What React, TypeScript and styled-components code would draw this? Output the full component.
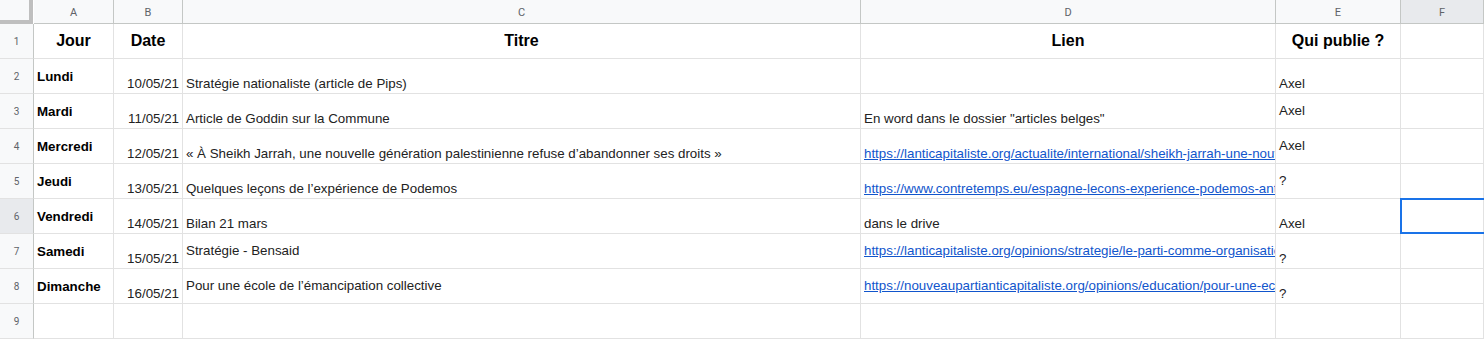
import React from 'react';
import styled, { createGlobalStyle, css } from 'styled-components';

const GlobalStyle = createGlobalStyle`
    html, body {
        margin: 0;
        padding: 0;
        background: #ffffff;
        overflow: hidden;
    }
`;

type VAlign = 'top' | 'middle' | 'bottom';

const COLS = [80, 69, 678, 415, 125];
const LETTERS = ['A', 'B', 'C', 'D', 'E', 'F'];

const Sheet = styled.div`
    display: grid;
    grid-template-columns: 34px ${COLS.map(c => `${c}px`).join(' ')} 1fr;
    grid-auto-rows: 35px;
    grid-template-rows: 24px;
    width: 1484px;
    font-family: "Liberation Sans", Arial, sans-serif;
    color: #000;
`;

const Corner = styled.div`
    background: #f8f9fa;
    border-right: 4px solid #bfbfbf;
    border-bottom: 4px solid #bfbfbf;
    box-sizing: border-box;
    width: 33px;
`;

const ColHead = styled.div<{ $active?: boolean }>`
    display: flex;
    align-items: center;
    justify-content: center;
    background: ${p => (p.$active ? '#e8eaed' : '#f8f9fa')};
    border-right: 1px solid #c4c7c5;
    border-bottom: 1px solid #c4c7c5;
    box-sizing: border-box;
    font-family: Roboto, "Liberation Sans", sans-serif;
    font-size: 11px;
    color: #5f6368;
    padding-top: 1px;
`;

const RowHead = styled.div<{ $active?: boolean }>`
    display: flex;
    align-items: center;
    justify-content: center;
    background: ${p => (p.$active ? '#e8eaed' : '#f8f9fa')};
    border-right: 1px solid #c4c7c5;
    border-bottom: 1px solid #e2e2e2;
    box-sizing: border-box;
    font-family: Roboto, "Liberation Sans", sans-serif;
    font-size: 10px;
    color: #5f6368;
`;

const Cell = styled.div<{ $v?: VAlign; $align?: 'left' | 'right' | 'center'; $selected?: boolean }>`
    position: relative;
    display: flex;
    flex-direction: column;
    justify-content: ${p => (p.$v === 'top' ? 'flex-start' : p.$v === 'middle' ? 'center' : 'flex-end')};
    text-align: ${p => p.$align || 'left'};
    border-right: 1px solid #e2e2e2;
    border-bottom: 1px solid #e2e2e2;
    box-sizing: border-box;
    padding: 0 3px 1px 3px;
    font-size: 13.33px;
    line-height: 16px;
    color: #222;
    white-space: nowrap;
    overflow: hidden;
    ${p => p.$selected && css`
        overflow: visible;
        &::after {
            content: '';
            position: absolute;
            left: -1px;
            top: -1px;
            right: -3px;
            bottom: -1px;
            border: 2px solid #1a73e8;
            pointer-events: none;
        }
    `}
`;

const HeadCell = styled(Cell)`
    justify-content: center;
    text-align: center;
    font-size: 16px;
    font-weight: bold;
    color: #000;
    padding-bottom: 1px;
`;

const Day = styled(Cell)`
    font-weight: bold;
    color: #000;
    padding-bottom: 0;
    padding-top: 1px;
`;

// long urls run up to the cell border, then get cut
const Clip = styled.span`
    display: block;
    overflow: hidden;
    margin-right: -3px;
`;

const Link = styled.a`
    color: #1155cc;
    text-decoration: underline;
`;

type Row = {
    day: string;
    date: string;
    title: string;
    titleV: VAlign;
    link?: string;
    isUrl?: boolean;
    linkV: VAlign;
    who: string;
    whoV: VAlign;
};

const rows: Row[] = [
    { day: 'Lundi', date: '10/05/21', title: 'Stratégie nationaliste (article de Pips)', titleV: 'bottom', linkV: 'bottom', who: 'Axel', whoV: 'bottom' },
    { day: 'Mardi', date: '11/05/21', title: 'Article de Goddin sur la Commune', titleV: 'bottom', link: 'En word dans le dossier "articles belges"', linkV: 'bottom', who: 'Axel', whoV: 'middle' },
    { day: 'Mercredi', date: '12/05/21', title: '« À Sheikh Jarrah, une nouvelle génération palestinienne refuse d’abandonner ses droits »', titleV: 'bottom', link: 'https://lanticapitaliste.org/actualite/international/sheikh-jarrah-une-nouvelle-generation-palestinienne-refuse-dabandonner-ses-droits', isUrl: true, linkV: 'bottom', who: 'Axel', whoV: 'middle' },
    { day: 'Jeudi', date: '13/05/21', title: 'Quelques leçons de l’expérience de Podemos', titleV: 'bottom', link: 'https://www.contretemps.eu/espagne-lecons-experience-podemos-anticapitaliste', isUrl: true, linkV: 'bottom', who: '?', whoV: 'middle' },
    { day: 'Vendredi', date: '14/05/21', title: 'Bilan 21 mars', titleV: 'bottom', link: 'dans le drive', linkV: 'bottom', who: 'Axel', whoV: 'bottom' },
    { day: 'Samedi', date: '15/05/21', title: 'Stratégie - Bensaid', titleV: 'middle', link: 'https://lanticapitaliste.org/opinions/strategie/le-parti-comme-organisation-strategique', isUrl: true, linkV: 'middle', who: '?', whoV: 'bottom' },
    { day: 'Dimanche', date: '16/05/21', title: 'Pour une école de l’émancipation collective', titleV: 'middle', link: 'https://nouveaupartianticapitaliste.org/opinions/education/pour-une-ecole-de-lemancipation-collective', isUrl: true, linkV: 'middle', who: '?', whoV: 'bottom' },
];

const SELECTED_ROW = 6;

const App = () => {
    return (
        <>
            <GlobalStyle />
            <Sheet>
                <Corner />
                {LETTERS.map(l => (
                    <ColHead key={l} $active={l === 'F'}>{l}</ColHead>
                ))}

                <RowHead>1</RowHead>
                <HeadCell>Jour</HeadCell>
                <HeadCell>Date</HeadCell>
                <HeadCell>Titre</HeadCell>
                <HeadCell>Lien</HeadCell>
                <HeadCell>Qui publie ?</HeadCell>
                <Cell />

                {rows.map((r, i) => {
                    const n = i + 2;
                    return (
                        <React.Fragment key={n}>
                            <RowHead $active={n === SELECTED_ROW}>{n}</RowHead>
                            <Day $v="middle">{r.day}</Day>
                            <Cell $v="bottom" $align="right">{r.date}</Cell>
                            <Cell $v={r.titleV}>{r.title}</Cell>
                            <Cell $v={r.linkV}>
                                {r.link && (r.isUrl ? <Clip><Link>{r.link}</Link></Clip> : r.link)}
                            </Cell>
                            <Cell $v={r.whoV}>{r.who}</Cell>
                            <Cell $selected={n === SELECTED_ROW} />
                        </React.Fragment>
                    );
                })}

                <RowHead>9</RowHead>
                {LETTERS.map(l => (
                    <Cell key={l} />
                ))}
            </Sheet>
        </>
    );
};

export default App;
